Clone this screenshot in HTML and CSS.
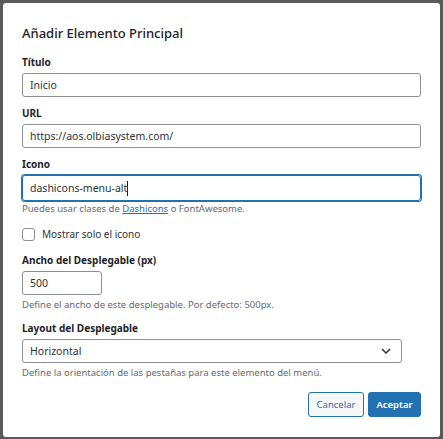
FILE: index.html
```html
<!DOCTYPE html>
<html lang="es">
<head>
<meta charset="utf-8">
<title>Añadir Elemento Principal</title>
<link rel="stylesheet" href="styles.css">
</head>
<body>
<div class="modal">
  <h2 class="title">Añadir Elemento Principal</h2>

  <div class="field">
    <label class="label">Título</label>
    <div class="input">Inicio</div>
  </div>

  <div class="field">
    <label class="label">URL</label>
    <div class="input">https://aos.olbiasystem.com/</div>
  </div>

  <div class="field">
    <label class="label">Icono</label>
    <div class="input focus">dashicons-menu-alt<span class="caret"></span></div>
    <p class="help tight">Puedes usar clases de <a href="#">Dashicons</a> o FontAwesome.</p>
  </div>

  <div class="check-row">
    <span class="checkbox"></span>
    <span class="check-label">Mostrar solo el icono</span>
  </div>

  <div class="field">
    <label class="label">Ancho del Desplegable (px)</label>
    <div class="input small">500</div>
    <p class="help">Define el ancho de este desplegable. Por defecto: 500px.</p>
  </div>

  <div class="field">
    <label class="label">Layout del Desplegable</label>
    <div class="input select">
      <span>Horizontal</span>
      <svg class="chev" width="10" height="6" viewBox="0 0 10 6"><path d="M1 1l4 4 4-4" fill="none" stroke="#2c3338" stroke-width="1.5"/></svg>
    </div>
    <p class="help">Define la orientación de las pestañas para este elemento del menú.</p>
  </div>

  <div class="actions">
    <button class="btn secondary">Cancelar</button>
    <button class="btn primary">Aceptar</button>
  </div>
</div>
</body>
</html>
```

FILE: styles.css
```css
* { box-sizing: border-box; }
html, body { margin: 0; padding: 0; }
body {
  background: #5a5a5a;
  width: 443px;
  height: 439px;
  overflow: hidden;
  font-family: "Noto Sans", "Open Sans", sans-serif;
  color: #1d2327;
  padding: 3px;
}
.modal {
  width: 437px;
  height: 434px;
  background: #fff;
  border-radius: 3px;
  padding: 20px 19px 0 19px;
}
.title {
  margin: 0 0 12px 0;
  font-size: 13px;
  font-weight: 500;
  line-height: 20px;
  color: #1d2327;
}
.field { margin-bottom: 9px; }
.label {
  display: block;
  font-size: 10px;
  font-weight: 700;
  line-height: 14px;
  margin-bottom: 4px;
  color: #1d2327;
}
.input {
  height: 24px;
  border: 1px solid #8c8f94;
  border-radius: 3px;
  padding: 0 7px;
  font-size: 10.5px;
  line-height: 22px;
  color: #2c3338;
  display: flex;
  align-items: center;
}
.input.focus {
  height: 26px;
  border-color: #2271b1;
  box-shadow: 0 0 0 1px #2271b1;
}
.caret {
  display: inline-block;
  width: 1px;
  height: 15px;
  background: #1d2327;
}
.input.small { width: 80px; }
.input.select {
  width: 380px;
  justify-content: space-between;
  padding-right: 10px;
}
.help {
  margin: 3px 0 0 0;
  font-size: 9.5px;
  line-height: 14px;
  color: #646970;
}
.help.tight { margin-top: 1px; }
.help a { color: #2271b1; text-decoration: underline; }
.check-row {
  display: flex;
  align-items: center;
  gap: 7px;
  margin: 11px 0 12px 0;
}
.checkbox {
  width: 13px;
  height: 13px;
  border: 1px solid #8c8f94;
  border-radius: 3px;
  background: #fff;
}
.check-label { font-size: 10px; color: #2c3338; }
.actions {
  display: flex;
  justify-content: flex-end;
  gap: 4px;
  margin-top: 12px;
}
.btn {
  height: 25px;
  border-radius: 3px;
  font-family: inherit;
  font-size: 9.5px;
  padding: 0 6px;
  cursor: pointer;
}
.btn.secondary {
  background: #f6f7f7;
  border: 1px solid #2271b1;
  color: #2271b1;
  width: 56px;
}
.btn.primary {
  background: #2271b1;
  border: 1px solid #2271b1;
  color: #fff;
  font-weight: 600;
  width: 53px;
}
```
